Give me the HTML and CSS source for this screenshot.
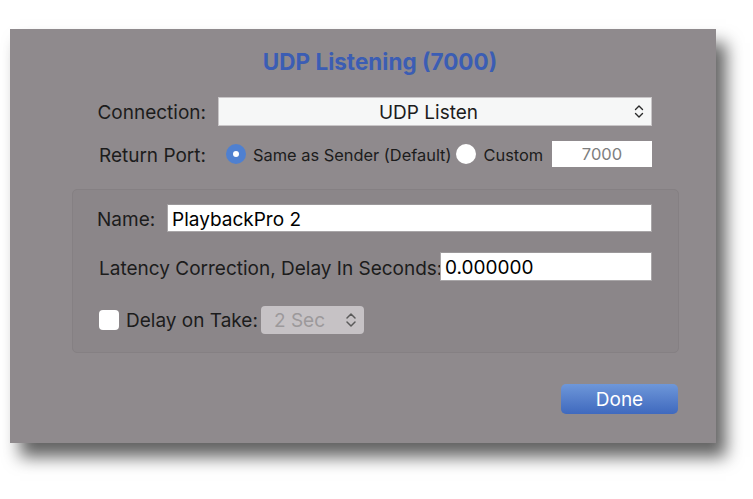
FILE: index.html
```html
<!DOCTYPE html>
<html>
  <head>
    <meta charset="UTF-8" />
    <title>UDP Listening (7000)</title>
    <link rel="stylesheet" href="styles.css">
  </head>
  <body>
    <div class="dialog">
      <h1 class="title">UDP Listening (7000)</h1>

      <!-- Connection type -->
      <div class="row connection-row">
        <span class="row-label">Connection:</span>
        <div class="select">
          <span class="select-text">UDP Listen</span>
          <svg class="chevrons" width="10" height="17" viewBox="0 0 10 17">
            <path d="M1.5 6.5 L5 3 L8.5 6.5 M1.5 10.5 L5 14 L8.5 10.5" fill="none" stroke="#2a2a2a" stroke-width="1.4" stroke-linecap="round" stroke-linejoin="round" />
          </svg>
        </div>
      </div>

      <!-- Return port -->
      <div class="row port-row">
        <span class="row-label">Return Port:</span>
        <span class="radio checked"></span>
        <span class="radio-text">Same as Sender (Default)</span>
        <span class="radio"></span>
        <span class="radio-text">Custom</span>
        <span class="port-field">7000</span>
      </div>

      <div class="panel">
        <div class="panel-row name-row">
          <span class="name-label">Name:</span>
          <span class="field">PlaybackPro 2</span>
        </div>
        <div class="panel-row latency-row">
          <span class="latency-label">Latency Correction, Delay In Seconds:</span>
          <span class="field">0.000000</span>
        </div>
        <div class="panel-row delay-row">
          <span class="checkbox"></span>
          <span class="delay-label">Delay on Take:</span>
          <div class="popup">
            <span>2 Sec</span>
            <svg class="chevrons" width="12" height="18" viewBox="0 0 12 18">
              <path d="M2 7 L6 3 L10 7 M2 11 L6 15 L10 11" fill="none" stroke="#5a5a5a" stroke-width="1.5" stroke-linecap="round" stroke-linejoin="round" />
            </svg>
          </div>
        </div>
      </div>

      <div class="buttons">
        <button class="done" type="button">Done</button>
      </div>
    </div>
  </body>
</html>
```

FILE: styles.css
```css
body {
  margin: 0;
  padding-bottom: 40px;
  background: #ffffff;
  font-family: Inter, "Liberation Sans", sans-serif;
  font-size: 19px;
  color: #1c1c1c;
}
.dialog {
  box-sizing: border-box;
  margin: 29px 0 0 10px;
  width: 706px;
  height: 414px;
  background: #8f8a8d;
  box-shadow: 10px 14px 16px rgba(0, 0, 0, 0.62);
  padding-top: 21px;
}
.title {
  margin: 0;
  padding-left: 34px;
  height: 24px;
  line-height: 24px;
  text-align: center;
  font-size: 22.5px;
  font-weight: bold;
  color: #3b5db4;
}
.row {
  display: flex;
  align-items: center;
  white-space: nowrap;
}
.row-label {
  width: 196px;
  text-align: right;
  flex-shrink: 0;
  padding-top: 2px;
}
.connection-row {
  margin-top: 23px;
  height: 29px;
}
.select {
  box-sizing: border-box;
  margin-left: 12px;
  width: 434px;
  height: 29px;
  background: #f6f7f7;
  border: 1px solid #c9c6c8;
  display: flex;
  align-items: center;
  position: relative;
}
.select-text {
  flex: 1;
  text-align: center;
  padding-right: 13px;
  padding-top: 2px;
}
.select .chevrons {
  position: absolute;
  right: 7px;
  top: 5px;
}
.port-row {
  margin-top: 15px;
  height: 26px;
}
.radio {
  box-sizing: border-box;
  width: 20px;
  height: 20px;
  border-radius: 50%;
  background: #ffffff;
  flex-shrink: 0;
  margin-left: 5px;
  display: flex;
  align-items: center;
  justify-content: center;
}
.port-row .row-label + .radio {
  margin-left: 20px;
}
.radio.checked {
  background: #4f80d0;
}
.radio.checked::after {
  content: "";
  width: 6px;
  height: 6px;
  border-radius: 50%;
  background: #ffffff;
}
.radio-text {
  margin-left: 7px;
  font-size: 16.4px;
  padding-top: 1px;
}
.port-field {
  box-sizing: border-box;
  margin-left: auto;
  margin-right: 64px;
  width: 100px;
  height: 26px;
  line-height: 27px;
  background: #ffffff;
  text-align: center;
  color: #7e7e7e;
  font-size: 16.5px;
}
.panel {
  box-sizing: border-box;
  margin: 22px 37px 0 62px;
  height: 164px;
  background: #8b8689;
  border: 1px solid #858083;
  border-radius: 5px;
  padding: 14px 26px 0 24px;
}
.panel-row {
  display: flex;
  align-items: center;
  white-space: nowrap;
}
.name-row {
  height: 28px;
}
.latency-row {
  margin-top: 20px;
  height: 29px;
}
.delay-row {
  margin-top: 25px;
  height: 28px;
}
.name-label {
  width: 70px;
  flex-shrink: 0;
  padding-top: 3px;
}
.latency-label {
  width: 341px;
  flex-shrink: 0;
  margin-left: 2px;
  padding-top: 3px;
}
.field {
  box-sizing: border-box;
  flex: 1;
  height: 100%;
  background: #ffffff;
  border: 1px solid #a9a6a8;
  border-top-color: #9b989a;
  padding-left: 4px;
  line-height: 29px;
  color: #000000;
}
.checkbox {
  box-sizing: border-box;
  width: 20px;
  height: 20px;
  border-radius: 4px;
  background: #ffffff;
  margin-left: 2px;
  flex-shrink: 0;
}
.delay-label {
  margin-left: 7px;
  width: 135px;
}
.popup {
  box-sizing: border-box;
  width: 103px;
  height: 28px;
  background: #c6c2c5;
  border-radius: 4px;
  display: flex;
  align-items: center;
  justify-content: space-between;
  padding: 0 7px 0 13px;
  color: #9c999b;
}
.buttons {
  display: flex;
  justify-content: flex-end;
  margin: 31px 38px 0 0;
}
.done {
  width: 117px;
  height: 30px;
  border: none;
  border-radius: 5px;
  background: linear-gradient(#6e97d9, #3f69be);
  color: #ffffff;
  font-family: Inter, "Liberation Sans", sans-serif;
  font-size: 19px;
  padding: 0;
}
```
